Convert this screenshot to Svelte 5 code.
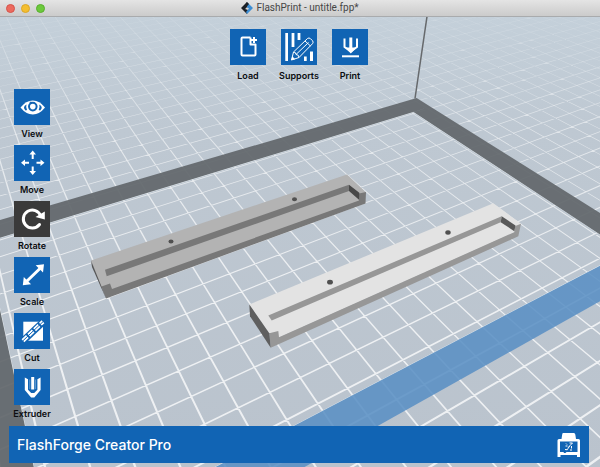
<script>
  const topTools = [
    { id: 'load', label: 'Load' },
    { id: 'supports', label: 'Supports' },
    { id: 'print', label: 'Print' },
  ];

  const sideTools = [
    { id: 'view', label: 'View' },
    { id: 'move', label: 'Move' },
    { id: 'rotate', label: 'Rotate' },
    { id: 'scale', label: 'Scale' },
    { id: 'cut', label: 'Cut' },
    { id: 'extruder', label: 'Extruder' },
  ];

  let active = $state('rotate');

  // Camera: depth is linear in the bed coordinates, horizon is level at y = -237.
  const depth = (a, b) => 1.7124 + 0.03827 * a - 0.0663 * b;

  const project = (a, b) => {
    const d = depth(a, b);
    const x = (286.48 + 59.66 * a + 7.76 * b) / d;
    const y = 1000 / d - 237;
    return `${x.toFixed(2)} ${y.toFixed(2)}`;
  };

  const quad = (a0, b0, a1, b1) =>
    `M${project(a0, b0)}L${project(a1, b0)}L${project(a1, b1)}L${project(a0, b1)}Z`;

  const NEAR = 1.3;
  const FAR = 4.2;
  const HALF = 0.027;

  // lines are thin strips lying on the bed, so they get thinner with distance
  const gridPath = () => {
    let d = '';
    for (let a = -30; a <= 60; a++) {
      const b0 = (1.7124 + 0.03827 * a - FAR) / 0.0663;
      const b1 = (1.7124 + 0.03827 * a - NEAR) / 0.0663;
      d += quad(a - HALF, b0, a + HALF, b1);
    }
    for (let b = -50; b <= 20; b++) {
      const a0 = (NEAR - 1.7124 + 0.0663 * b) / 0.03827;
      const a1 = (FAR - 1.7124 + 0.0663 * b) / 0.03827;
      d += quad(a0, b - HALF, a1, b + HALF);
    }
    return d;
  };

  const grid = gridPath();
  const bed = quad(-4.25, -8.14, 16.15, 4.26);
  const frame =
    quad(-5.4, -9.28, 17.28, -8.14) +
    quad(16.15, -8.14, 17.28, 4.26) +
    quad(-5.4, -8.14, -4.25, 4.26);
  const front = quad(-5.4, 4.26, 17.28, 5.4);
</script>

{#snippet icon(id)}
  <svg class="icon" viewBox="0 0 36 36" aria-hidden="true">
    {#if id === 'load'}
      <path class="line" d="M20.500 8.500H12.500a1 1 0 0 0-1 1V25.500a1 1 0 0 0 1 1h12a1 1 0 0 0 1-1V15.500H20.500V8.500" />
      <path class="line" d="M24 8v6M21 11h6" />
    {:else if id === 'supports'}
      <path class="fill" d="M4.300 4h2.700v28H4.300zM10.600 4h2.800v14h-2.800zM16.600 4h2.800v7h-2.800zM23 27.500h2.700V32H23zM29 22.500h3V32h-3z" />
      <path class="blue-fill thin" d="M10.500 31l2-8L26.500 9.500q1.500-1.200 3 .2l2 2q1.300 1.500 0 3L18 28.500z" />
      <path class="thin" d="M12.500 23q2.500 0 2.500 2.500q3 0 3 3M15 25.500L27.500 13.500M24 12l5.500 5" />
      <path class="fill" d="M10.200 31.300l1.100-4 2.900 2.900z" />
    {:else if id === 'print'}
      <path class="line" d="M12.500 9.500v8.500l6.300 4.500 6.200-4.500V9.500" />
      <path class="prong" d="M18.800 8.500v11" />
      <path class="fill" d="M13 18.500h11.500l-5.700 6z" />
      <path class="line" d="M10 27.300h17" />
    {:else if id === 'view'}
      <path class="fill" d="M6.500 18.500Q12 11.500 18.800 11.500T31 18.500Q25.500 25.500 18.800 25.500T6.500 18.500z" />
      <circle class="ring" cx="18.800" cy="17.600" r="3.800" />
      <path class="blue-fill" d="M12.500 15.500q-4.500 2.500-1 6 1-.2 1.500-.5-1.500-2.500-.5-5.500zM25.200 15.500q4.500 2.500 1 6-1-.2-1.500-.5 1.500-2.500.5-5.500zM15.500 12.800h2l-1.500 2z" />
    {:else if id === 'move'}
      <path class="line" d="M18.700 14V8M18.700 21.500v6M15 17.700H9M22.500 17.700h6" />
      <path class="fill" d="M18.700 5.500l3.300 4h-6.600zM18.700 30l3.300-4h-6.600zM7 17.700l4-3.300v6.600zM30.500 17.700l-4-3.300v6.600z" />
    {:else if id === 'rotate'}
      <path class="stroke-wide" d="M26.800 15A9 9 0 1 0 25.500 23.500" />
      <path class="fill" d="M21.500 16L30.800 10.500V18.500z" />
    {:else if id === 'scale'}
      <path class="stroke-wide" d="M12 25L27 10.500" />
      <path class="fill" d="M30 7.200l-1 8.300-7.300-7.300zM8.800 28.300l1-8.300 7.300 7.300z" />
    {:else if id === 'cut'}
      <path class="fill" d="M9.300 8.700h19.700v19H9.300z" />
      <path class="cut-gap" d="M6 30.800L32 6.200" />
      <path class="cut-dash" d="M9 27.700L29 8.700" />
      <path class="notch" d="M9 27.700L29 8.700" />
    {:else if id === 'extruder'}
      <path class="fill" d="M10.800 8.500l3.200 1.700v10.500l3.200 3.300h3l3.200-3.300V10.200l3.200-1.700v12.500l-6.300 7.500h-3.200l-6.300-7.500z" />
      <path class="prong" d="M18.700 8v12.500" />
      <path class="inner-wall" d="M15.800 10.500v9.500M21.600 10.500v9.500" />
    {/if}
  </svg>
{/snippet}

{#snippet tool(t)}
  <button class="tool" class:active={active === t.id} onclick={() => (active = t.id)}>
    <span class="tile">{@render icon(t.id)}</span>
    <span class="label">{t.label}</span>
  </button>
{/snippet}

<div class="window">
  <header class="titlebar">
    <div class="lights">
      <button class="light close" aria-label="Close"></button>
      <button class="light minimize" aria-label="Minimize"></button>
      <button class="light zoom" aria-label="Zoom"></button>
    </div>
    <h1 class="title">
      <svg class="logo" viewBox="0 0 12 12" aria-hidden="true">
        <path fill="#1b1f25" d="M6 0L0 6l6 6 1-4-3-1 3-3z" />
        <path fill="#3c8dd3" d="M6.500 .5L12 6l-6 6-1-2 3-3.500L6 5.500z" />
        <path fill="#1b1f25" d="M6 0l2 2-4 4.500L3 4z" />
      </svg>
      FlashPrint - untitle.fpp*
    </h1>
  </header>

  <main class="stage">
    <svg class="scene" viewBox="0 16 600 451" preserveAspectRatio="xMidYMid slice" aria-label="Build plate">
      <defs>
        <linearGradient id="sky" x1="0" y1="0" x2="0" y2="1">
          <stop offset="0" stop-color="#c4d0da" />
          <stop offset="0.25" stop-color="#bec8d2" />
          <stop offset="1" stop-color="#bac3cd" />
        </linearGradient>
        <linearGradient id="fade" gradientUnits="userSpaceOnUse" x1="0" y1="16" x2="0" y2="300">
          <stop offset="0" stop-color="#fff" stop-opacity="0.15" />
          <stop offset="0.4" stop-color="#fff" stop-opacity="0.55" />
          <stop offset="1" stop-color="#fff" stop-opacity="0.75" />
        </linearGradient>
      </defs>

      <rect y="16" width="600" height="451" fill="url(#sky)" />
      <path class="grid" d={grid} />
      <path class="bed" d={bed} />
      <path class="frame" d={frame} />
      <path class="front" d={front} />
      <path class="post" d="M427 16L415 98" />

      <g class="part grey">
        <path class="top" d="M91 260L347 174L366 192L359 201L112 289L101 287Z" />
        <path class="face" d="M101.500 286L110 283L112 288.500L359 200V193L366 191.500L365.500 203L106 298Z" />
        <path class="end" d="M91 260L101.500 286L106 298L92 266.500Z" />
        <path class="face" d="M105 269.300L349 184.300V190.500L106.700 275.700Z" />
        <path class="inner" d="M349 184.300L359.300 192.300L359 199.300L349 190.500Z" />
        <ellipse class="hole" cx="171" cy="241" rx="2.500" ry="2" />
        <ellipse class="hole" cx="294.500" cy="198.700" rx="2.500" ry="2" />
      </g>

      <g class="part white">
        <path class="top" d="M249.300 304L493.300 202.700L521 223.300L514.300 232L279 337L269.300 333Z" />
        <path class="face" d="M269.300 332.700L278.300 330.500L279 336.700L514.300 231.700L515.300 225.500L521 223.300L518.300 235.700L513.500 238L270.700 347.300Z" />
        <path class="end" d="M249.300 304L269.300 332.700L270.700 347.300L250 315.700Z" />
        <path class="face" d="M268.300 315L501.700 215.700L500.700 221.700L271.700 320Z" />
        <path class="inner" d="M501.700 215.700L515.500 225L514.300 230.700L500.700 221.700Z" />
        <ellipse class="hole" cx="330" cy="281.700" rx="2.900" ry="2.400" />
        <ellipse class="hole" cx="448" cy="232" rx="2.700" ry="2.200" />
      </g>
    </svg>

    <nav class="toolbar" aria-label="File tools">
      {#each topTools as t (t.id)}
        {@render tool(t)}
      {/each}
    </nav>

    <nav class="sidebar" aria-label="Model tools">
      {#each sideTools as t (t.id)}
        {@render tool(t)}
      {/each}
    </nav>

    <footer class="status">
      <span>FlashForge Creator Pro</span>
      <svg class="printer" viewBox="0 0 24 24" aria-label="Printer">
        <path fill="#fff" d="M6 0h11q1 0 1.300 1.500L19 6h2.500q1.500 0 1.500 1.500V24h-3v-2H3.500v2H.5V7.500Q.5 6 2 6h2.500l.7-4.500Q5.300 0 6 0z" />
        <path fill="#1164b4" d="M3 8.500h17.500v10.500H9.500l-1 1H7l-.5-1H3z" />
        <path fill="none" stroke="#fff" d="M9 10.500l1 1M8.500 13h2M8 16.500q3 1 3-1t2-2M12.500 10h3l-3.500 3.500M14.500 13v2.500M13 17h2" />
      </svg>
    </footer>
  </main>
</div>

<style>
  :global(body) {
    margin: 0;
  }

  .window {
    display: flex;
    flex-direction: column;
    min-height: 100vh;
    font-family: Inter, Roboto, sans-serif;
  }

  .titlebar {
    display: grid;
    grid-template-columns: 1fr auto 1fr;
    align-items: center;
    box-sizing: border-box;
    height: 17px;
    padding: 0 6px;
    background: linear-gradient(#e4e4e4, #cbcbcb);
    border-bottom: 1px solid #a9abad;
  }

  .lights {
    display: flex;
    gap: 6px;
  }

  .light {
    box-sizing: border-box;
    width: 9px;
    height: 9px;
    padding: 0;
    border: 1px solid #d6534a;
    border-radius: 50%;
    background: #ec6a5e;
  }

  .minimize {
    border-color: #dba628;
    background: #f4be2f;
  }

  .zoom {
    border-color: #58ae2e;
    background: #6cc93c;
  }

  .title {
    display: flex;
    align-items: center;
    gap: 3px;
    margin: 0;
    font-family: Roboto, sans-serif;
    font-size: 10px;
    font-weight: 400;
    line-height: 16px;
    color: #464646;
  }

  .logo {
    width: 12px;
    height: 12px;
  }

  .stage {
    position: relative;
    display: flex;
    flex: 1;
    flex-direction: column;
    padding: 12px 11px 4px 9px;
  }

  .scene {
    position: absolute;
    inset: 0;
    width: 100%;
    height: 100%;
  }

  .grid {
    fill: url(#fade);
  }

  .bed {
    fill: none;
    stroke: #e2e8ed;
    stroke-width: 1;
  }

  .frame {
    fill: #62676c;
    fill-opacity: 0.93;
  }

  .front {
    fill: #5a8fc4;
    fill-opacity: 0.88;
  }

  .post {
    stroke: #66696c;
    stroke-width: 1.500;
  }

  .grey .top { fill: #b3b3b3; }
  .grey .face { fill: #787878; }
  .grey .end { fill: #555; }
  .grey .inner { fill: #484848; }
  .white .top { fill: #e3e3e3; }
  .white .face { fill: #979797; }
  .white .end { fill: #5f5f5f; }
  .white .inner { fill: #585858; }
  .hole { fill: #505050; }

  .toolbar,
  .sidebar,
  .status {
    position: relative;
  }

  .toolbar {
    display: flex;
    justify-content: center;
    margin-bottom: 7px;
  }

  .toolbar .tool {
    width: 51px;
    gap: 5px;
  }

  .sidebar {
    display: flex;
    flex-direction: column;
    align-items: flex-start;
    gap: 5px;
    margin-bottom: auto;
  }

  .sidebar .tool {
    width: 46px;
    gap: 3px;
  }

  .tool {
    display: flex;
    flex-direction: column;
    align-items: center;
    padding: 0;
    border: none;
    background: none;
    font-family: inherit;
    color: #0b0d10;
    cursor: pointer;
  }

  .tile {
    width: 36px;
    height: 36px;
    background: #1164b4;
    --tile: #1164b4;
  }

  .active .tile {
    background: #3a3a3a;
    --tile: #3a3a3a;
  }

  .label {
    font-size: 9px;
    font-weight: 600;
    line-height: 12px;
    white-space: nowrap;
  }

  .icon {
    display: block;
    width: 36px;
    height: 36px;
    fill: none;
    stroke-linejoin: round;
  }

  .icon .fill { fill: #fff; }
  .icon .blue-fill { fill: var(--tile); }
  .icon .line { stroke: #fff; stroke-width: 2; }
  .icon .thin { stroke: #fff; stroke-width: 1; }
  .icon .prong { stroke: #fff; stroke-width: 3; }
  .icon .inner-wall { stroke: #fff; stroke-width: 1; stroke-opacity: 0.35; }
  .icon .stroke-wide { stroke: #fff; stroke-width: 3; stroke-linecap: round; }
  .icon .ring { stroke: var(--tile); stroke-width: 2; }
  .icon .notch { stroke: var(--tile); stroke-width: 1; }
  .icon .cut-gap { stroke: var(--tile); stroke-width: 7; }
  .icon .cut-dash { stroke: #fff; stroke-width: 4; stroke-dasharray: 6 2; }

  .status {
    display: flex;
    align-items: center;
    justify-content: space-between;
    box-sizing: border-box;
    height: 37px;
    margin-top: 6px;
    padding: 0 8px;
    background: #1164b4;
    font-size: 14px;
    font-weight: 500;
    color: #fff;
  }

  .printer {
    width: 24px;
    height: 24px;
  }
</style>
